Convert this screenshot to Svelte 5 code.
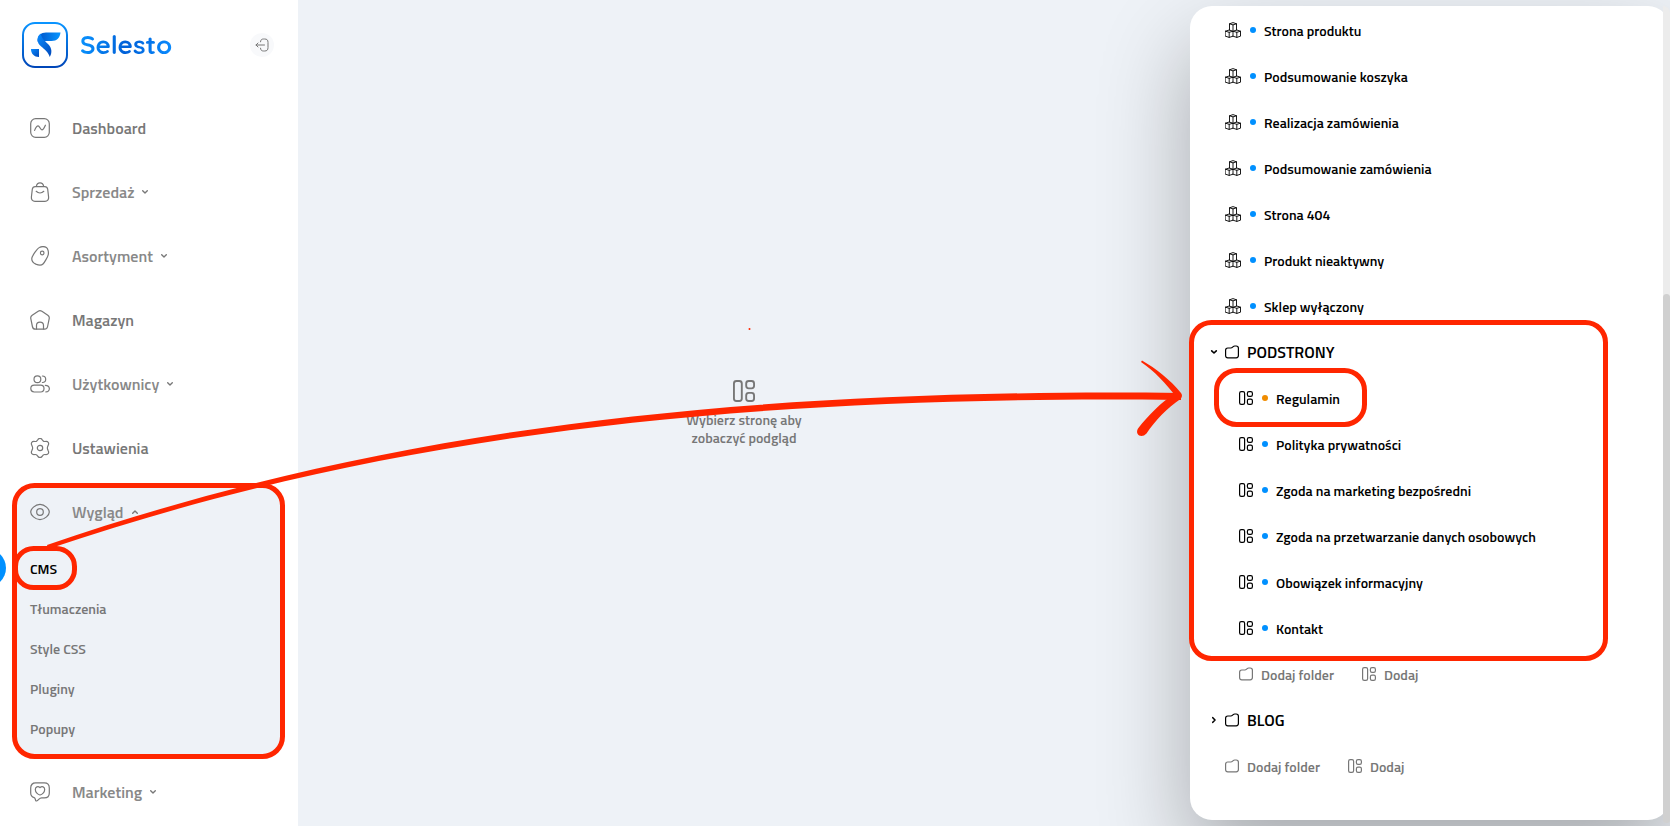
<script>
    const nav = [
        { icon: 'dashboard', label: 'Dashboard' },
        { icon: 'bag', label: 'Sprzedaż', group: true },
        { icon: 'tag', label: 'Asortyment', group: true },
        { icon: 'store', label: 'Magazyn' },
        { icon: 'users', label: 'Użytkownicy', group: true },
        { icon: 'gear', label: 'Ustawienia' },
        {
            icon: 'eye',
            label: 'Wygląd',
            group: true,
            children: ['CMS', 'Tłumaczenia', 'Style CSS', 'Pluginy', 'Popupy']
        },
        { icon: 'heart', label: 'Marketing', group: true }
    ]

    const systemPages = [
        'Strona produktu',
        'Podsumowanie koszyka',
        'Realizacja zamówienia',
        'Podsumowanie zamówienia',
        'Strona 404',
        'Produkt nieaktywny',
        'Sklep wyłączony'
    ]

    const subpages = [
        { title: 'Regulamin', draft: true },
        { title: 'Polityka prywatności' },
        { title: 'Zgoda na marketing bezpośredni' },
        { title: 'Zgoda na przetwarzanie danych osobowych' },
        { title: 'Obowiązek informacyjny' },
        { title: 'Kontakt' }
    ]

    let active = $state('CMS')
    let openGroup = $state('Wygląd')
    let folderOpen = $state(true)

    function toggle(item) {
        if (item.children) openGroup = openGroup == item.label ? '' : item.label
    }
</script>

{#snippet navIcon(name)}
    <svg class="nav-icon" viewBox="0 0 20 20" aria-hidden="true">
        {#if name == 'dashboard'}
            <rect x="0.7" y="0.7" width="18.6" height="18.6" rx="5" />
            <path d="M4.6 12.4c1-2.6 2.4-4.6 3.5-4.6 1.500 0 2.200 4 3.800 4 1.200 0 2.300-1.800 3.500-4.600" />
        {:else if name == 'bag'}
            <path d="M5.200 4.700h9.600c1.500 0 2.600 1 2.900 2.500l.9 7.800c.3 2.500-1.200 4.300-3.600 4.300H5c-2.400 0-3.900-1.800-3.600-4.300l.9-7.800c.3-1.500 1.400-2.500 2.900-2.500z" />
            <path d="M6.300 4.500C6.700 2.200 8 .9 10 .9s3.300 1.300 3.700 3.600M6.200 9.300c2.200 2 5.400 2 7.600 0" />
        {:else if name == 'tag'}
            <path d="M9.400 1.500c2-1 5.300-1 7 .1 1.600 1 2.400 4.800 1.800 7.200-.5 2-3.700 7.700-5.200 9.200-1.600 1.600-4.200 1.400-7.200.1-2.800-1.300-4.200-3.400-4-5.600C2 10 7.200 2.500 9.400 1.500z" />
            <circle cx="12.200" cy="7" r="1.800" />
        {:else if name == 'store'}
            <path d="M8.200 1.200c1.300-.7 2.500-.6 3.700.1l5.900 4c1.200.8 1.700 1.900 1.400 3.300l-1.600 7.900c-.4 1.800-1.400 2.700-3 2.700H5.400c-1.600 0-2.600-.9-3-2.700L.8 8.600C.5 7.200 1 6.100 2.200 5.300z" />
            <path d="M6.500 19v-3.500c0-4.600 7-4.600 7 0V19" />
        {:else if name == 'users'}
            <circle cx="7.400" cy="5.200" r="3.400" />
            <path d="M12.400 2c2 0 3.300 1.400 3.300 3.200s-1.300 3.200-3.300 3.300M15.300 11.300c5.300 0 5.300 6.600.6 6.600" />
            <rect x=".8" y="11.200" width="13.200" height="6.800" rx="3.400" />
        {:else if name == 'gear'}
            <path d="M7.700 1.800C9-.1 11-.1 12.300 1.800l.8 1c.5.6 1 .8 1.800.7l1.200-.1c2.100 0 3.100 1.700 2.200 3.600l-.6 1.400c-.4 1-.4 2.200 0 3.200l.6 1.400c.9 1.900-.1 3.600-2.200 3.600l-1.200-.1c-.8-.1-1.300.1-1.800.7l-.8 1C11 20.100 9 20.100 7.700 18.200l-.8-1c-.5-.6-1-.8-1.800-.7l-1.200.1c-2.100 0-3.100-1.700-2.200-3.600l.6-1.400c.4-1 .4-2.200 0-3.200L1.700 7c-.9-1.900.1-3.600 2.200-3.600l1.200.1c.8.1 1.300-.1 1.800-.7z" />
            <circle cx="10" cy="10" r="2.700" />
        {:else if name == 'eye'}
            <path d="M.7 10C.7 7 5 2.400 10 2.400S19.300 7 19.300 10 15 17.600 10 17.600.7 13 .7 10z" />
            <circle cx="10" cy="10" r="3.300" />
        {:else if name == 'heart'}
            <path d="M5.700.9h8.600c3 0 5 2 5 5v5c0 3-2 5-5 5h-2.600c-1.400 0-2.100.6-3 1.500-1.500 1.700-3 2.400-3.300.3-.1-1.100-.3-1.700-1.200-2.100C2 14.800.7 13.200.7 10.900v-5c0-3 2-5 5-5z" />
            <path d="M10 5.600c2-1.900 4.700-.7 4.700 1.900 0 2.700-2.600 5-4.700 5.500-2.100-.5-4.700-2.800-4.700-5.500 0-2.600 2.700-3.800 4.700-1.900z" />
        {/if}
    </svg>
{/snippet}

{#snippet chevron(dir)}
    <svg class="chevron {dir}" viewBox="0 0 8 8" aria-hidden="true">
        <path d="M1.700 2.800 4 5l2.300-2.200" />
    </svg>
{/snippet}

{#snippet layoutIcon()}
    <svg class="icon" viewBox="0 0 14 14" aria-hidden="true">
        <rect x=".6" y=".6" width="5" height="12.800" rx="1.600" />
        <rect x="8.400" y=".6" width="5" height="4.700" rx="1.600" />
        <rect x="8.400" y="8.200" width="5" height="5.200" rx="1.600" />
    </svg>
{/snippet}

{#snippet folderIcon()}
    <svg class="icon" viewBox="0 0 14 14" aria-hidden="true">
        <path d="M2.800 3h3c.8 0 1.200-.2 1.800-.8l.3-.3C8.500 1.300 9 1 9.800 1h1.400c1.400 0 2.200.8 2.200 2.200v7.400c0 1.400-.8 2.200-2.200 2.200H2.800C1.400 12.800.6 12 .6 10.600V5.200C.6 3.800 1.400 3 2.800 3z" />
    </svg>
{/snippet}

{#snippet boxesIcon()}
    <svg class="icon boxes" viewBox="0 0 16 16" aria-hidden="true">
        <path d="M4.500 8V1.800L8 .6l3.500 1.200V8M4.500 1.800 8 2.900l3.500-1.100M8 2.900v5" />
        <path d="M.5 9.200 4.200 8 8 9.200v5l-3.800 1.200L.5 14.200zM.5 9.200l3.700 1.100L8 9.200M4.200 10.300v5.100" />
        <path d="M8 9.200 11.800 8l3.700 1.200v5l-3.700 1.200L8 14.200M8 9.200l3.800 1.100 3.700-1.100M11.800 10.300v5.100" />
    </svg>
{/snippet}

{#snippet addRow(nested)}
    <div class="row add" class:nested>
        <button>{@render folderIcon()}Dodaj folder</button>
        <button>{@render layoutIcon()}Dodaj</button>
    </div>
{/snippet}

<div class="app">
    <aside class="sidebar">
        <header>
            <a class="brand" href="/">
                <svg class="logo" viewBox="0 0 46 46" aria-hidden="true">
                    <defs>
                        <linearGradient id="frame" x1="0" y1="0" x2="0" y2="1">
                            <stop offset="0" stop-color="#0a94ff" />
                            <stop offset="1" stop-color="#0046b8" />
                        </linearGradient>
                        <linearGradient id="wing" x1="0" y1="0" x2="1" y2="0">
                            <stop offset="0" stop-color="#0052c8" />
                            <stop offset="1" stop-color="#0796ff" />
                        </linearGradient>
                        <linearGradient id="tail" x1="0" y1="0" x2="1" y2="1">
                            <stop offset="0" stop-color="#0a8cff" />
                            <stop offset="1" stop-color="#0048ba" />
                        </linearGradient>
                    </defs>
                    <rect x="1" y="1" width="44" height="44" rx="12" fill="none" stroke="url(#frame)" stroke-width="2" />
                    <path d="M15.500 19.500C15.500 13.500 19 10.500 24 10.500h14.500C38 15.500 35 19 29.500 19H25z" fill="url(#wing)" />
                    <path d="M15.500 17.500c0-2.500 1.300-4.700 3.300-6 .7 5 4.200 7.500 7.200 10.500 4 4 4.300 8.500 1.800 13-1.500-5-5.300-7.500-8.600-10.500-2.300-2-3.700-4-3.700-7z" fill="url(#tail)" />
                    <path d="M9 27h8v8c-4.800 0-8-3.200-8-8z" fill="url(#tail)" />
                </svg>
                <span>Selesto</span>
            </a>
            <button class="collapse" aria-label="Zwiń menu">
                <svg viewBox="0 0 14 14" aria-hidden="true">
                    <path d="M5.500 3.800C5.700 1.800 6.600 1 8.600 1h1c2.400 0 3.400 1 3.400 3.400v5.200c0 2.400-1 3.400-3.400 3.400h-1c-2 0-2.900-.8-3.100-2.800M9.500 7H1M3 5 1 7l2 2" />
                </svg>
            </button>
        </header>

        <nav>
            {#each nav as item}
                <div class="group" class:open={item.children && openGroup == item.label}>
                    <button class="nav-item" class:light={item.group} onclick={() => toggle(item)}>
                        {@render navIcon(item.icon)}
                        <span>{item.label}</span>
                        {#if item.group}
                            {@render chevron(item.children && openGroup == item.label ? 'up' : 'down')}
                        {/if}
                    </button>
                    {#if item.children && openGroup == item.label}
                        <ul>
                            {#each item.children as child}
                                <li class:active={active == child}>
                                    <button onclick={() => active = child}>{child}</button>
                                </li>
                            {/each}
                        </ul>
                    {/if}
                </div>
            {/each}
        </nav>
    </aside>

    <main>
        <div class="placeholder">
            {@render layoutIcon()}
            <p>Wybierz stronę aby<br />zobaczyć podgląd</p>
        </div>
    </main>

    <section class="panel">
        {#each systemPages as title}
            <button class="row page">
                {@render boxesIcon()}
                <i class="dot"></i>
                {title}
            </button>
        {/each}

        <button class="row folder" onclick={() => folderOpen = !folderOpen}>
            {@render chevron(folderOpen ? 'down' : 'right')}
            {@render folderIcon()}
            PODSTRONY
        </button>
        {#if folderOpen}
            {#each subpages as page}
                <button class="row page nested">
                    {@render layoutIcon()}
                    <i class="dot" class:draft={page.draft}></i>
                    {page.title}
                </button>
            {/each}
            {@render addRow(true)}
        {/if}

        <button class="row folder">
            {@render chevron('right')}
            {@render folderIcon()}
            BLOG
        </button>
        {@render addRow(false)}
        <div class="track"><div class="thumb"></div></div>
    </section>

    <!-- hand-drawn marks over the page -->
    <svg class="marks" aria-hidden="true">
        <g class="outline">
            <rect x="14.500" y="485.500" width="268" height="271" rx="20" />
            <rect x="15.500" y="548.500" width="59" height="39" rx="18" />
            <rect x="1191.500" y="322.500" width="414" height="336" rx="20" />
            <rect x="1216.500" y="370.500" width="148" height="54" rx="20" />
        </g>
        <path d="M47 545C360 437.500 700 387.500 1181 393v7C700 394 360 443.500 48 549z" />
        <path d="M1142 360.500c14 8 28 19 39 32.500l-5 4c-10-14-22-26-35-35z" />
        <path d="M1138 428.500c11-14 23-26 37-35l6-.5c1.500 2 1.300 4-.5 6-13 9-25 21-34 34.500-5 5.500-12 1-8.500-5z" />
        <circle cx="749.500" cy="329" r="1" />
    </svg>
</div>

<style>
    :global(body) {
        margin: 0;
        background: #eef2f7;
    }
    .app {
        position: relative;
        display: grid;
        grid-template-columns: 298px 1fr 480px;
        height: 100vh;
        overflow: hidden;
        font-family: 'Titillium Web', Roboto, 'Liberation Sans', sans-serif;
        font-size: 14px;
        font-weight: 600;
        color: #000;
    }
    button {
        padding: 0;
        border: 0;
        background: none;
        font: inherit;
        color: inherit;
        cursor: pointer;
    }
    svg {
        flex: none;
        fill: none;
        stroke: currentColor;
        stroke-linecap: round;
        stroke-linejoin: round;
    }

    .sidebar {
        background: #fff;
        color: #777;
    }
    header {
        display: flex;
        align-items: center;
        justify-content: space-between;
        padding: 22px 24px 28px 22px;
    }
    .brand {
        display: flex;
        align-items: center;
        gap: 12px;
        text-decoration: none;
    }
    .brand span {
        font-family: Quicksand, Comfortaa, Lato, sans-serif;
        font-size: 26px;
        font-weight: 700;
        line-height: 30px;
        background: linear-gradient(100deg, #0a94ff, #0060d8 50%, #0a8cff);
        background-clip: text;
        color: transparent;
    }
    .logo {
        width: 46px;
        height: 46px;
        stroke: none;
    }
    .collapse {
        display: flex;
        align-items: center;
        justify-content: center;
        width: 24px;
        height: 24px;
        border-radius: 50%;
        background: #f8f9fb;
    }
    .collapse svg {
        width: 14px;
        height: 14px;
    }
    .nav-item {
        display: flex;
        align-items: center;
        width: 100%;
        height: 64px;
        padding: 0 30px;
        font-size: 16px;
    }
    .nav-item span {
        margin-left: 22px;
    }
    .nav-item.light span {
        color: #888;
    }
    .nav-icon {
        width: 20px;
        height: 20px;
        stroke-width: 1.2;
    }
    .chevron {
        width: 8px;
        height: 8px;
        stroke-width: 1.4;
    }
    .chevron.up {
        transform: rotate(180deg);
    }
    .chevron.right {
        transform: rotate(-90deg);
    }
    .nav-item .chevron {
        margin-left: 7px;
    }
    .group.open {
        margin: 4px 14px;
        border-radius: 22px;
        background: #eef2f7;
    }
    .open .nav-item {
        height: 56px;
        padding: 0 16px;
    }
    ul {
        margin: 0;
        padding: 8px 0;
        list-style: none;
    }
    li {
        position: relative;
    }
    li button {
        width: 100%;
        height: 40px;
        padding: 0 16px;
        text-align: left;
    }
    li.active {
        color: #000;
    }
    li.active::before {
        content: '';
        position: absolute;
        top: 1px;
        left: -46px;
        width: 38px;
        height: 38px;
        border-radius: 50%;
        background: #0090ff;
    }

    main {
        display: flex;
        align-items: center;
        justify-content: center;
        color: #777;
    }
    .placeholder {
        display: flex;
        flex-direction: column;
        align-items: center;
        gap: 9px;
        text-align: center;
    }
    .placeholder .icon,
    .placeholder :global(.icon) {
        width: 22px;
        height: 22px;
    }
    .placeholder p {
        margin: 0;
        line-height: 18px;
    }

    .panel {
        position: relative;
        margin: 6px 0;
        padding-top: 1px;
        border-radius: 22px;
        background: #fff;
        box-shadow: 0 40px 90px rgba(0, 0, 0, 0.3);
    }
    .row {
        display: flex;
        align-items: center;
        width: 100%;
        height: 46px;
        padding-left: 35px;
    }
    .row.nested {
        padding-left: 49px;
    }
    .icon {
        width: 14px;
        height: 14px;
        stroke-width: 1.2;
    }
    .icon.boxes {
        width: 16px;
        height: 16px;
        stroke-width: 0.9;
    }
    .dot {
        width: 6px;
        height: 6px;
        margin: 0 8px 0 9px;
        border-radius: 50%;
        background: #0090ff;
    }
    .dot.draft {
        background: #f08c00;
    }
    .row.folder {
        gap: 8px;
        padding-left: 20px;
        font-size: 16px;
    }
    .row.folder .chevron {
        margin-right: -1px;
        stroke-width: 1.6;
    }
    .add {
        gap: 28px;
        color: #777;
    }
    .add button {
        display: flex;
        align-items: center;
        gap: 8px;
    }
    .track {
        position: absolute;
        top: 0;
        right: 0;
        bottom: 0;
        width: 7px;
        border-radius: 0 20px 0 0;
        background: #ececec;
    }
    .thumb {
        height: 65%;
        margin-top: 288px;
        border-radius: 4px;
        background: #d0d0d0;
    }

    .track {
        display: flow-root;
    }

    .marks {
        position: absolute;
        inset: 0;
        width: 100%;
        height: 100%;
        fill: #ff2600;
        stroke: none;
        pointer-events: none;
    }
    .outline {
        fill: none;
        stroke: #ff2600;
        stroke-width: 5;
    }
</style>
